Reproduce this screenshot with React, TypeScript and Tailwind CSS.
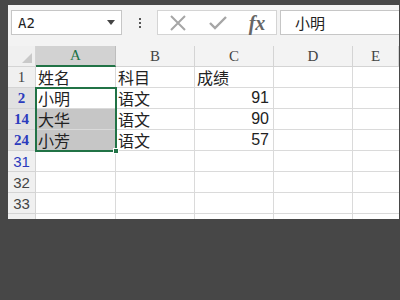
import React from "react";

const cjk = { fontFamily: '"Noto Sans CJK SC", "Noto Sans", sans-serif' };
const arial = { fontFamily: '"Liberation Sans", Arial, sans-serif' };
const serif = { fontFamily: '"Liberation Serif", "DejaVu Serif", serif' };

type Row = {
  n: string;
  blue?: boolean;
  bold?: boolean;
  sel?: boolean;
  a?: string;
  b?: string;
  c?: string;
  aFill?: boolean;
};

const rows: Row[] = [
  { n: "1", a: "姓名", b: "科目", c: "成绩" },
  { n: "2", blue: true, bold: true, sel: true, a: "小明", b: "语文", c: "91" },
  { n: "14", blue: true, bold: true, sel: true, a: "大华", b: "语文", c: "90", aFill: true },
  { n: "24", blue: true, bold: true, sel: true, a: "小芳", b: "语文", c: "57", aFill: true },
  { n: "31", blue: true },
  { n: "32" },
  { n: "33" },
];

export default function App() {
  return (
    <div className="w-[400px] h-[300px] bg-[#474747] pt-[5px] pl-[8px] pr-[1px]">
      <div className="bg-white h-[214px] flex flex-col overflow-hidden">
        {/* formula bar */}
        <div className="h-[41px] bg-[#f3f3f3] flex items-start pt-[5px] pl-[3px] shrink-0">
          <div className="w-[111px] h-[25px] bg-white border border-[#c6c6c6] flex items-center pl-[6px] pr-[6px]">
            <span className="text-[14px] text-[#222] flex-1 leading-none" style={{ fontFamily: '"DejaVu Sans Mono", monospace' }}>A2</span>
            <svg width="8" height="5" viewBox="0 0 8 5"><path d="M0 0h8L4 5z" fill="#444" /></svg>
          </div>
          <div className="w-[35px] h-[25px] flex flex-col items-center justify-center gap-[2px]">
            <div className="w-[2px] h-[2px] bg-[#555]" />
            <div className="w-[2px] h-[2px] bg-[#555]" />
            <div className="w-[2px] h-[2px] bg-[#555]" />
          </div>
          <div className="w-[120px] h-[25px] bg-white border border-[#d4d4d4] flex items-center">
            <div className="w-[40px] flex justify-center">
              <svg width="18" height="16" viewBox="0 0 18 16"><path d="M2 1L16 15M16 1L2 15" stroke="#a6a6a6" strokeWidth="2" /></svg>
            </div>
            <div className="w-[40px] flex justify-center">
              <svg width="18" height="14" viewBox="0 0 18 14"><path d="M1 7L6 12L17 1" stroke="#a6a6a6" strokeWidth="2.4" fill="none" /></svg>
            </div>
            <div className="w-[38px] flex justify-center">
              <span className="text-[20px] italic font-bold text-[#666] leading-none" style={serif}>fx</span>
            </div>
          </div>
          <div className="ml-[3px] flex-1 h-[25px] bg-white border border-[#c6c6c6] border-r-0 flex items-center pl-[14px]">
            <span className="text-[15px] text-[#222] leading-none" style={cjk}>小明</span>
          </div>
        </div>
        {/* sheet */}
        <div className="grid grid-cols-[28px_80px_79px_79px_79px_1fr] relative">
          {/* header */}
          <div className="h-[21px] bg-[#f0f0f0] border-b border-r border-[#d4d4d4] relative">
            <svg className="absolute right-[3px] bottom-[3px]" width="10" height="10" viewBox="0 0 10 10"><path d="M10 0V10H0z" fill="#c9c9c9" /></svg>
          </div>
          <div className="h-[21px] bg-[#d2d2d2] border-b-2 border-[#217346] border-r border-r-[#bdbdbd] flex items-center justify-center text-[15px] leading-none text-[#217346]" style={serif}>A</div>
          {["B", "C", "D", "E"].map((l) => (
            <div key={l} className="h-[21px] bg-[#f3f3f3] border-b border-r border-[#d4d4d4] flex items-center justify-center text-[15px] leading-none text-[#444]" style={serif}>{l}</div>
          ))}
          {rows.map((r) => (
            <React.Fragment key={r.n}>
              <div
                className={`h-[21px] border-b border-r border-[#d4d4d4] flex items-center justify-center text-[15px] leading-none ${r.sel ? "bg-[#e1e1e1]" : "bg-[#f0f0f0]"} ${r.blue ? "text-[#2b3bbd]" : "text-[#444]"} ${r.bold ? "font-bold" : ""}`}
                style={r.bold || r.n === "1" ? serif : arial}
              >
                {r.n}
              </div>
              <div className={`h-[21px] border-b border-r border-[#dadada] flex items-center pl-[2px] text-[16px] leading-none text-[#222] ${r.aFill ? "bg-[#c6c6c6]" : "bg-white"}`} style={cjk}>{r.a}</div>
              <div className="h-[21px] border-b border-r border-[#dadada] flex items-center pl-[2px] text-[16px] leading-none text-[#222]" style={cjk}>{r.b}</div>
              <div
                className={`h-[21px] border-b border-r border-[#dadada] flex items-center text-[16px] leading-none text-[#222] ${r.n === "1" ? "pl-[2px]" : "justify-end pr-[4px]"}`}
                style={r.n === "1" ? cjk : arial}
              >
                {r.c}
              </div>
              <div className="h-[21px] border-b border-r border-[#dadada]" />
              <div className="h-[21px] border-b border-[#dadada]" />
            </React.Fragment>
          ))}
          <div className="h-[10px] bg-[#f0f0f0] border-r border-[#d4d4d4]" />
          <div className="h-[10px] border-r border-[#dadada]" />
          <div className="h-[10px] border-r border-[#dadada]" />
          <div className="h-[10px] border-r border-[#dadada]" />
          <div className="h-[10px] border-r border-[#dadada]" />
          <div className="h-[10px]" />
          {/* selection box */}
          <div className="absolute left-[27px] top-[41px] w-[82px] h-[65px] border-2 border-[#217346] pointer-events-none" />
          <div className="absolute left-[105px] top-[102px] w-[6px] h-[6px] bg-[#217346] border border-white" />
        </div>
      </div>
    </div>
  );
}
